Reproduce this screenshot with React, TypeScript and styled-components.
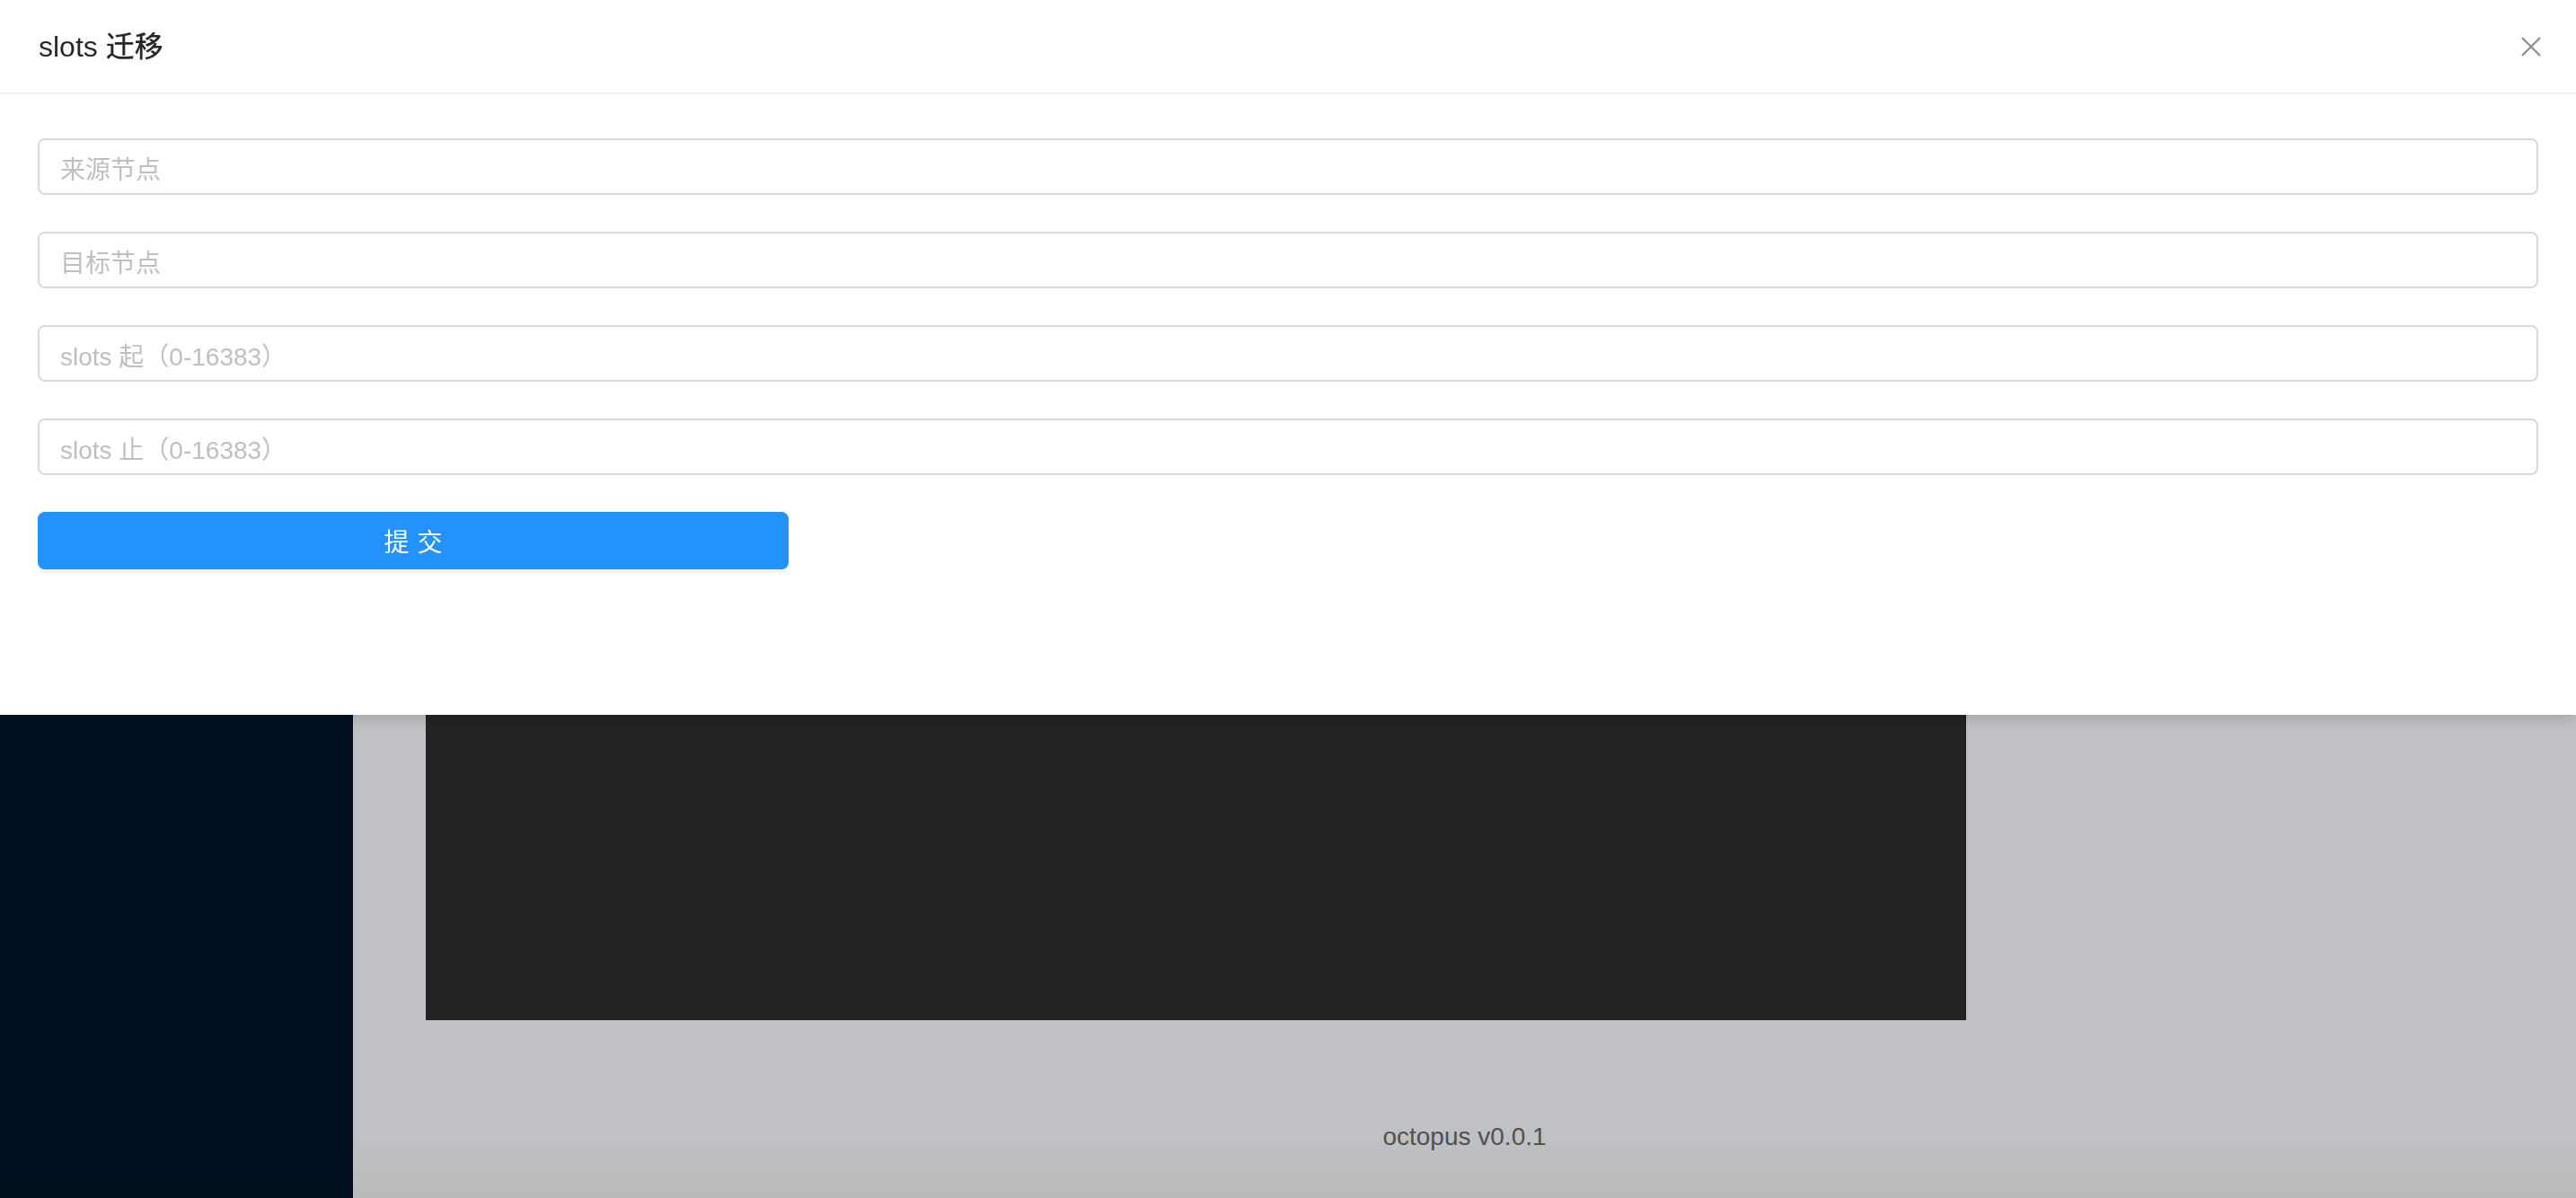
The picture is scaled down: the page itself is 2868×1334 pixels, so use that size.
import React from "react"
import styled, { createGlobalStyle } from "styled-components"

const GlobalStyle = createGlobalStyle`
  html, body {
    margin: 0;
    padding: 0;
    height: 100%;
    overflow: hidden;
  }
  body {
    font-family: "Liberation Sans", "Noto Sans CJK SC", sans-serif;
    background: #f0f2f5;
  }
`

const Layout = styled.div`
  display: flex;
  height: 100vh;
`

const Sider = styled.aside`
  width: 393px;
  flex-shrink: 0;
  background: #001529;
`

const ContentColumn = styled.div`
  flex: 1;
  display: flex;
  flex-direction: column;
  background: #f0f2f5;
`

const Main = styled.main`
  flex: 1;
  display: flex;
  flex-direction: column;
  justify-content: flex-end;
  padding: 0 0 62px 81px;
  overflow: hidden;
`

const Terminal = styled.div`
  width: 1715px;
  height: 1000px;
  background: #2c2c2c;
`

const Footer = styled.footer`
  padding: 48px 0;
  line-height: 40px;
  text-align: center;
  font-size: 28px;
  color: #666;
`

const Mask = styled.div`
  position: fixed;
  inset: 0;
  background:
    linear-gradient(to bottom, transparent calc(100% - 70px), rgba(0, 0, 0, 0.045)),
    rgba(0, 0, 0, 0.2);
`

const Drawer = styled.section`
  position: fixed;
  top: 0;
  left: 0;
  right: 0;
  height: 796px;
  background: #fff;
  box-shadow: 0 4px 18px rgba(0, 0, 0, 0.16);
  display: flex;
  flex-direction: column;
`

const DrawerHeader = styled.header`
  height: 103px;
  display: flex;
  align-items: center;
  justify-content: space-between;
  padding: 0 39px 0 43px;
  border-bottom: 2px solid #f0f0f0;
`

const Title = styled.h2`
  margin: 0;
  font-size: 32px;
  line-height: 44px;
  font-weight: 500;
  color: rgba(0, 0, 0, 0.85);
`

const CloseButton = styled.button`
  border: 0;
  background: none;
  padding: 0;
  width: 22px;
  height: 24px;
  display: grid;
  place-items: center;
  color: rgba(0, 0, 0, 0.45);
  cursor: pointer;
`

const DrawerBody = styled.div`
  padding: 49px 42px 0 42px;
  display: flex;
  flex-direction: column;
  gap: 41px;
`

const Input = styled.input`
  box-sizing: border-box;
  width: 100%;
  height: 63px;
  padding: 8px 23px 0;
  border: 2px solid #d9d9d9;
  border-radius: 8px;
  font-family: inherit;
  font-size: 28px;
  color: rgba(0, 0, 0, 0.85);
  outline: none;
  &::placeholder {
    color: #bfbfbf;
  }
`

const SubmitButton = styled.button`
  width: 836px;
  height: 64px;
  border: 0;
  border-radius: 8px;
  background: #2492fc;
  color: #fff;
  font-family: inherit;
  font-size: 28px;
  letter-spacing: 9px;
  text-indent: 9px;
  box-shadow: 0 4px 0 rgba(0, 0, 0, 0.045);
  cursor: pointer;
`

const fields = ["来源节点", "目标节点", "slots 起（0-16383）", "slots 止（0-16383）"]

const CloseIcon = () => (
  <svg width="22" height="22" viewBox="0 0 22 22" fill="none" stroke="currentColor" strokeWidth="2.2">
    <path d="M1 1 L21 21 M21 1 L1 21" />
  </svg>
)

const App = () => {
  return (
    <>
      <GlobalStyle />
      <Layout>
        <Sider />
        <ContentColumn>
          <Main>
            <Terminal />
          </Main>
          <Footer>octopus v0.0.1</Footer>
        </ContentColumn>
      </Layout>
      <Mask />
      <Drawer>
        <DrawerHeader>
          <Title>slots 迁移</Title>
          <CloseButton aria-label="close">
            <CloseIcon />
          </CloseButton>
        </DrawerHeader>
        <DrawerBody>
          {fields.map((f) => (
            <Input key={f} placeholder={f} />
          ))}
          <div>
            <SubmitButton>提交</SubmitButton>
          </div>
        </DrawerBody>
      </Drawer>
    </>
  )
}

export default App
